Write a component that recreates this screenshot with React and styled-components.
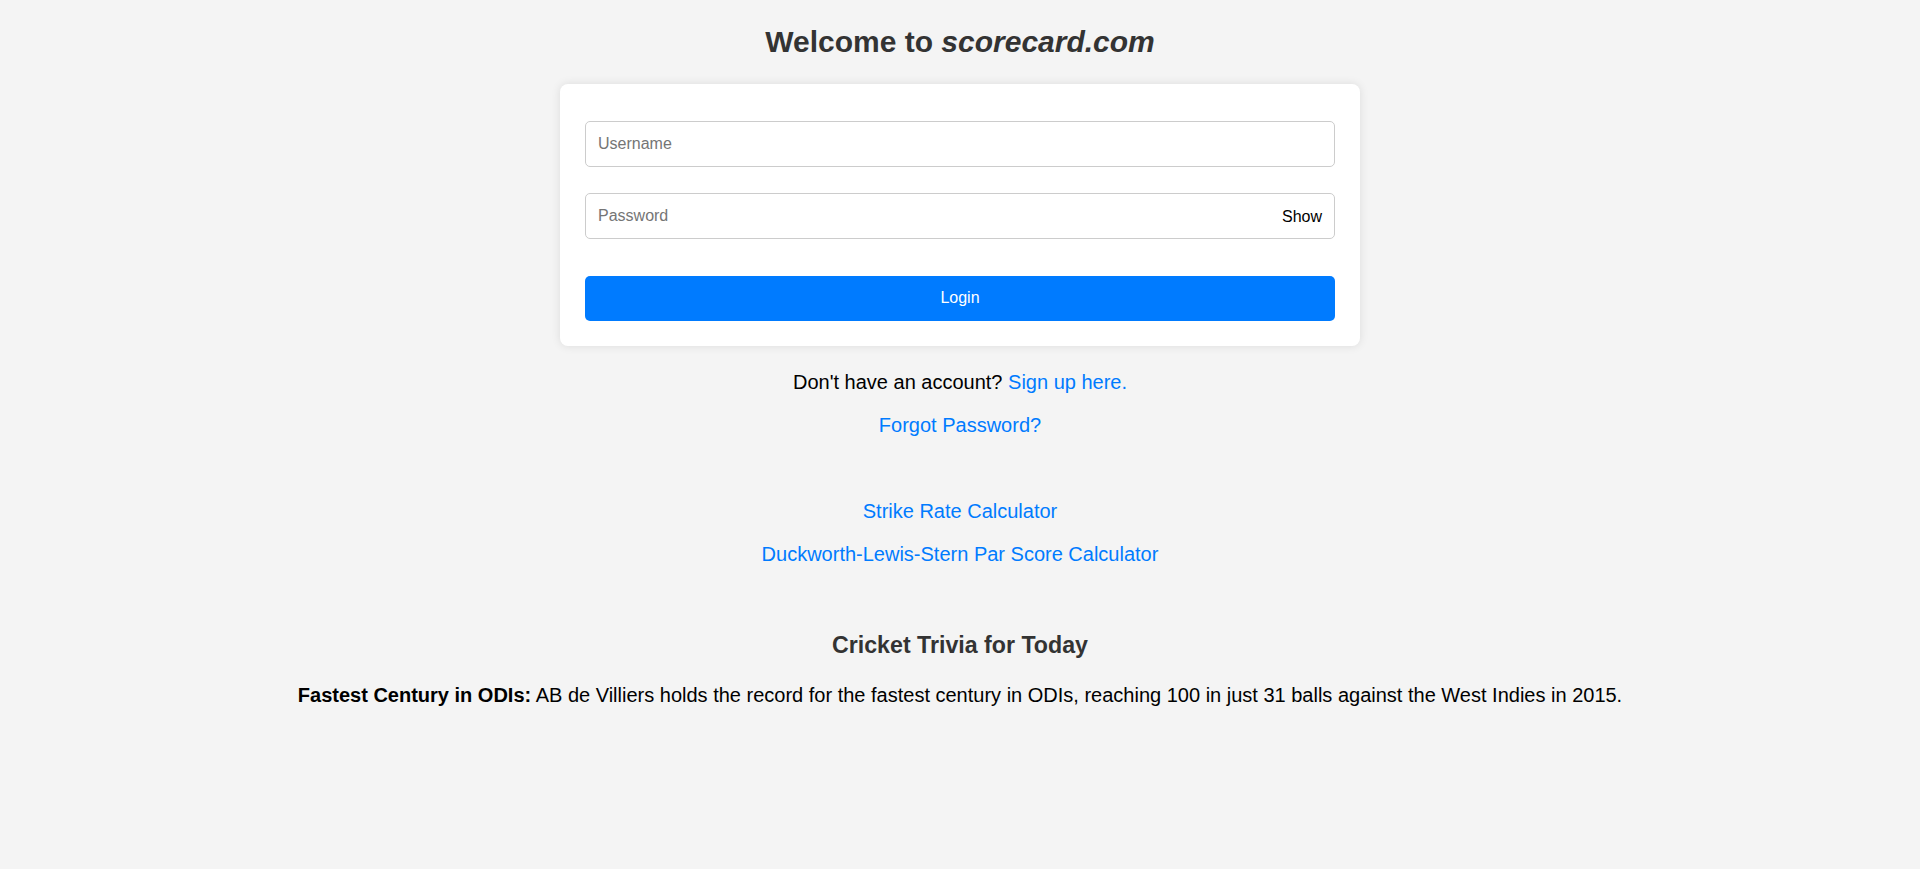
import React, { useState } from 'react';
import styled, { createGlobalStyle } from 'styled-components';

const GlobalStyle = createGlobalStyle`
  html, body {
    margin: 0;
    padding: 0;
    background: #f4f4f4;
    font-family: "Liberation Sans", Arial, sans-serif;
  }
`;

const Page = styled.div`
  display: flex;
  flex-direction: column;
  align-items: center;
  text-align: center;
  min-height: 869px;
  font-size: 20px;
  color: #000;
`;

const Title = styled.h1`
  margin: 25px 0 24px;
  font-size: 30px;
  font-weight: bold;
  color: #333;
  line-height: 34.5px;

  em {
    font-style: italic;
  }
`;

const Card = styled.form`
  width: 800px;
  box-sizing: border-box;
  padding: 37px 25px 25px;
  background: #fff;
  border-radius: 8px;
  box-shadow: 0 0 10px rgba(0, 0, 0, 0.1);
  display: flex;
  flex-direction: column;
`;

const Field = styled.div`
  position: relative;
  margin-bottom: ${({ last }) => (last ? '37px' : '26px')};
`;

const Input = styled.input`
  width: 100%;
  height: 46px;
  box-sizing: border-box;
  padding: 1px 12px 0;
  border: 1px solid #ccc;
  border-radius: 5px;
  font-family: inherit;
  font-size: 16px;
  color: #333;
  outline: none;

  &::placeholder {
    color: #757575;
  }
`;

const ShowToggle = styled.button`
  position: absolute;
  top: 50%;
  right: 9px;
  transform: translateY(-50%);
  margin-top: 1px;
  background: none;
  border: 0;
  padding: 0 4px;
  font-family: inherit;
  font-size: 16px;
  color: #000;
  cursor: pointer;
`;

const LoginButton = styled.button`
  height: 45px;
  border: 0;
  border-radius: 5px;
  background: #007bff;
  color: #fff;
  font-family: inherit;
  font-size: 16px;
  cursor: pointer;
`;

const Line = styled.p`
  margin: 0;
  margin-top: ${({ gap }) => gap}px;
  line-height: 23px;
  font-size: 20px;
`;

const Link = styled.a`
  color: #007bff;
  text-decoration: none;
`;

const TriviaTitle = styled.h3`
  margin: 66px 0 0;
  font-size: 23.2px;
  line-height: 26.4px;
  font-weight: bold;
  color: #333;
`;

const TriviaText = styled.p`
  margin: 26px 0 0;
  font-size: 20px;
  line-height: 23px;

  strong {
    font-weight: bold;
  }
`;

export default function App() {
  const [showPassword, setShowPassword] = useState(false);

  return (
    <Page>
      <GlobalStyle />
      <Title>
        Welcome to <em>scorecard.com</em>
      </Title>
      <Card onSubmit={(e) => e.preventDefault()}>
        <Field>
          <Input type="text" placeholder="Username" />
        </Field>
        <Field last>
          <Input type={showPassword ? 'text' : 'password'} placeholder="Password" />
          <ShowToggle type="button" onClick={() => setShowPassword(!showPassword)}>
            {showPassword ? 'Hide' : 'Show'}
          </ShowToggle>
        </Field>
        <LoginButton type="submit">Login</LoginButton>
      </Card>
      <Line gap={25}>
        Don't have an account? <Link href="#">Sign up here.</Link>
      </Line>
      <Line gap={20}>
        <Link href="#">Forgot Password?</Link>
      </Line>
      <Line gap={63}>
        <Link href="#">Strike Rate Calculator</Link>
      </Line>
      <Line gap={20}>
        <Link href="#">Duckworth-Lewis-Stern Par Score Calculator</Link>
      </Line>
      <TriviaTitle>Cricket Trivia for Today</TriviaTitle>
      <TriviaText>
        <strong>Fastest Century in ODIs:</strong> AB de Villiers holds the record for the fastest
        century in ODIs, reaching 100 in just 31 balls against the West Indies in 2015.
      </TriviaText>
    </Page>
  );
}
